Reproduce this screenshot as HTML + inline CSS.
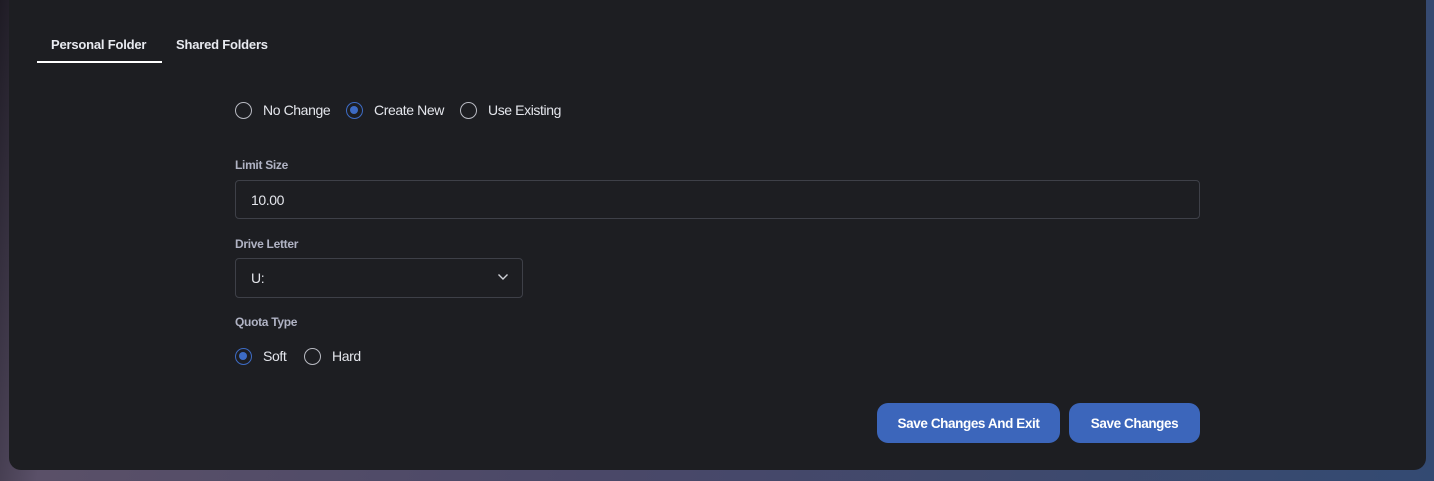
<!DOCTYPE html>
<html><head><style>
*{box-sizing:border-box;margin:0;padding:0}
body{width:1434px;height:481px;overflow:hidden;font-family:"Liberation Sans",Arial,sans-serif;
background:linear-gradient(100deg,#1e1b24 0%,#5a5068 8%,#4a4868 45%,#334a72 100%);position:relative}
.panel{position:absolute;left:9px;top:-10px;width:1417px;height:480px;background:#1d1e22;border-radius:0 0 12px 12px}
.t{position:absolute;font-size:13px;font-weight:bold;color:#e8eaf0;letter-spacing:-0.2px}
.ul{position:absolute;left:37px;top:61px;width:125px;height:2px;background:#fff}
.r{position:absolute;width:17px;height:17px;border:1.5px solid #b8bac2;border-radius:50%}
.r.on{border-color:#3d6bc4}
.r.on::after{content:"";position:absolute;left:3px;top:3px;width:8px;height:8px;border-radius:50%;background:#3d6bc4}
.lb{position:absolute;font-size:14px;color:#e4e6ec;letter-spacing:-0.4px}
.lab{position:absolute;font-size:12px;font-weight:bold;color:#b0b3c4;letter-spacing:-0.3px}
.box{position:absolute;border:1px solid #3e4048;border-radius:4px;background:#1d1e22}
.btn{position:absolute;top:403px;height:40px;border-radius:11px;background:#3c66bb;color:#fff;font-size:13.5px;font-weight:bold;text-align:center;line-height:41px;letter-spacing:-0.4px}
</style></head><body>
<div class="panel"></div>
<div class="t" style="left:51px;top:37px">Personal Folder</div>
<div class="t" style="left:176px;top:37px">Shared Folders</div>
<div class="ul"></div>
<div class="r" style="left:235px;top:102px"></div><div class="lb" style="left:263px;top:102px">No Change</div>
<div class="r on" style="left:346px;top:102px"></div><div class="lb" style="left:374px;top:102px">Create New</div>
<div class="r" style="left:460px;top:102px"></div><div class="lb" style="left:488px;top:102px">Use Existing</div>
<div class="lab" style="left:235px;top:158px">Limit Size</div>
<div class="box" style="left:235px;top:180px;width:965px;height:39px"></div>
<div class="lb" style="left:251px;top:192px">10.00</div>
<div class="lab" style="left:235px;top:237px">Drive Letter</div>
<div class="box" style="left:235px;top:258px;width:288px;height:40px"></div>
<div class="lb" style="left:251px;top:270px">U:</div>
<svg style="position:absolute;left:497px;top:273px" width="12" height="8" viewBox="0 0 12 8"><path d="M1.5 1.5 L6 6 L10.5 1.5" fill="none" stroke="#d0d2d8" stroke-width="1.4"/></svg>
<div class="lab" style="left:235px;top:315px">Quota Type</div>
<div class="r on" style="left:235px;top:348px"></div><div class="lb" style="left:263px;top:348px">Soft</div>
<div class="r" style="left:304px;top:348px"></div><div class="lb" style="left:332px;top:348px">Hard</div>
<div class="btn" style="left:877px;width:183px">Save Changes And Exit</div>
<div class="btn" style="left:1069px;width:131px">Save Changes</div>
</body></html>
